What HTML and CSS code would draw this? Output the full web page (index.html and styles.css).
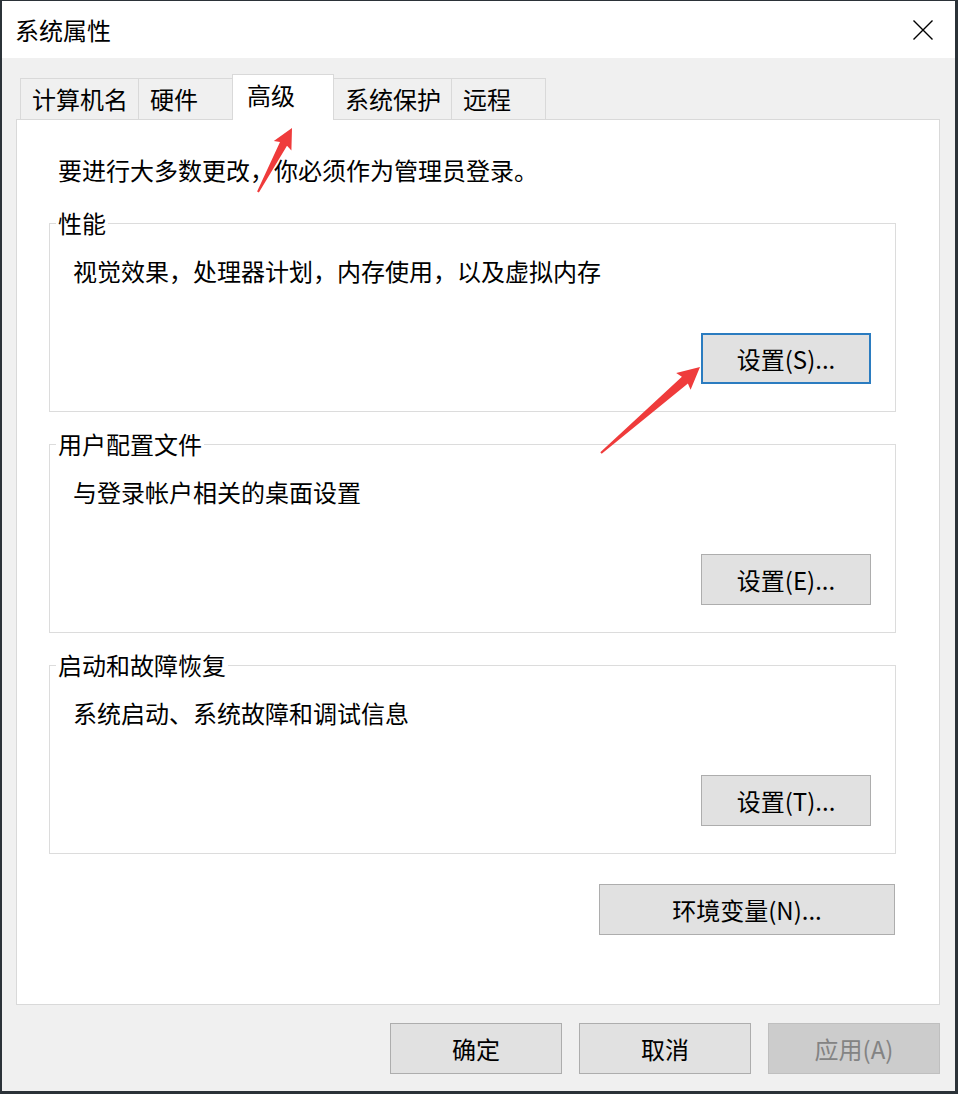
FILE: index.html
```html
<!DOCTYPE html>
<html lang="zh-CN">
<head>
  <meta charset="UTF-8">
  <title>系统属性</title>
  <link rel="stylesheet" href="styles.css">
</head>
<body>
  <div class="window">
    <div class="titlebar">
      <span class="title">系统属性</span>
      <button class="close" aria-label="关闭">
        <svg width="20" height="20" viewBox="0 0 20 20"><path d="M0.5 0.5 L19.5 19.5 M19.5 0.5 L0.5 19.5" stroke="#000" stroke-width="1.4" fill="none"/></svg>
      </button>
    </div>
    <div class="dialog-body">
      <div class="tabs">
        <div class="tab">计算机名</div>
        <div class="tab">硬件</div>
        <div class="tab selected">高级</div>
        <div class="tab">系统保护</div>
        <div class="tab">远程</div>
      </div>
      <div class="panel">
        <p class="note">要进行大多数更改，你必须作为管理员登录。</p>

        <fieldset class="group">
          <legend>性能</legend>
          <div class="group-body">
            <p>视觉效果，处理器计划，内存使用，以及虚拟内存</p>
            <div class="group-actions"><button class="btn default">设置(S)...</button></div>
          </div>
        </fieldset>

        <fieldset class="group">
          <legend>用户配置文件</legend>
          <div class="group-body">
            <p>与登录帐户相关的桌面设置</p>
            <div class="group-actions"><button class="btn">设置(E)...</button></div>
          </div>
        </fieldset>

        <fieldset class="group">
          <legend>启动和故障恢复</legend>
          <div class="group-body">
            <p>系统启动、系统故障和调试信息</p>
            <div class="group-actions"><button class="btn">设置(T)...</button></div>
          </div>
        </fieldset>

        <div class="env-row"><button class="btn env">环境变量(N)...</button></div>
      </div>
      <div class="dialog-buttons">
        <button class="btn wide">确定</button>
        <button class="btn wide">取消</button>
        <button class="btn wide disabled">应用(A)</button>
      </div>
    </div>
  </div>

  <!-- red annotation arrows -->
  <svg class="annotations" width="958" height="1094" viewBox="0 0 958 1094">
    <polygon fill="#ef3b3b" points="257.1,191.5 280,142 273.8,141 292,128 291.4,150.4 287,145.8 258.9,192.5"/>
    <polygon fill="#ef3b3b" points="600.3,452.2 681.9,376.7 676.2,373.1 700,367 690.6,389.7 687.9,383.5 601.7,453.8"/>
  </svg>
</body>
</html>
```

FILE: styles.css
```css
body {
  margin: 0;
  background-color: #2b3238;
  font-family: "Noto Sans CJK SC", "Microsoft YaHei", sans-serif;
  font-size: 24px;
  color: #000;
}
.window {
  margin: 1px 3px 3px 2px;
  background-color: #f0f0f0;
}
.titlebar {
  height: 57px;
  background-color: #fff;
  display: flex;
  align-items: center;
  justify-content: space-between;
  padding: 0 22px 0 13px;
}
.title {
  line-height: 30px;
}
.close {
  border: none;
  background: none;
  padding: 0;
  width: 20px;
  height: 20px;
  display: flex;
}
.dialog-body {
  padding: 16px 15px 17px 14px;
}
.tabs {
  display: flex;
  align-items: flex-end;
  height: 45px;
  margin-left: 4px;
}
.tab {
  height: 41px;
  box-sizing: border-box;
  min-width: 95px;
  padding: 0 10px 0 11px;
  border: 1px solid #d9d9d9;
  border-bottom: none;
  margin-left: -1px;
  line-height: 39px;
  background-color: #f0f0f0;
}
.tab:first-child {
  margin-left: 0;
}
.tab.selected {
  position: relative;
  z-index: 1;
  height: 46px;
  min-width: 102px;
  margin-bottom: -1px;
  padding: 0 14px;
  line-height: 40px;
  background-color: #fff;
}
.panel {
  background-color: #fff;
  border: 1px solid #d9d9d9;
  padding: 35px 43px 69px 32px;
}
.note {
  margin: 0 0 20px 9px;
  line-height: 30px;
  padding-bottom: 2px;
}
.group {
  margin: 0;
  padding: 0;
  min-width: 0;
  border: 1px solid #dcdcdc;
}
.group + .group {
  margin-top: 16px;
}
.group legend {
  margin-left: 6px;
  padding: 0 2px;
  line-height: 32px;
}
.group-body {
  padding: 17px 24px 27px 23px;
}
.group-body p {
  margin: 0;
  line-height: 30px;
  padding-bottom: 2px;
}
.group-actions {
  display: flex;
  justify-content: flex-end;
  margin-top: 45px;
}
.btn {
  box-sizing: border-box;
  width: 170px;
  height: 51px;
  background-color: #e1e1e1;
  border: 1px solid #adadad;
  font-family: inherit;
  font-size: 24px;
  color: #000;
  padding: 0;
}
.btn.default {
  border: 2px solid #2b7cc0;
}
.env-row {
  display: flex;
  justify-content: flex-end;
  margin-top: 30px;
}
.btn.env {
  width: 296px;
  margin-right: 1px;
}
.dialog-buttons {
  display: flex;
  justify-content: flex-end;
  gap: 17px;
  margin-top: 18px;
}
.btn.wide {
  width: 172px;
}
.btn.disabled {
  background-color: #cccccc;
  border-color: #bfbfbf;
  color: #838383;
}
.annotations {
  position: absolute;
  top: 0;
  left: 0;
  pointer-events: none;
}
```
